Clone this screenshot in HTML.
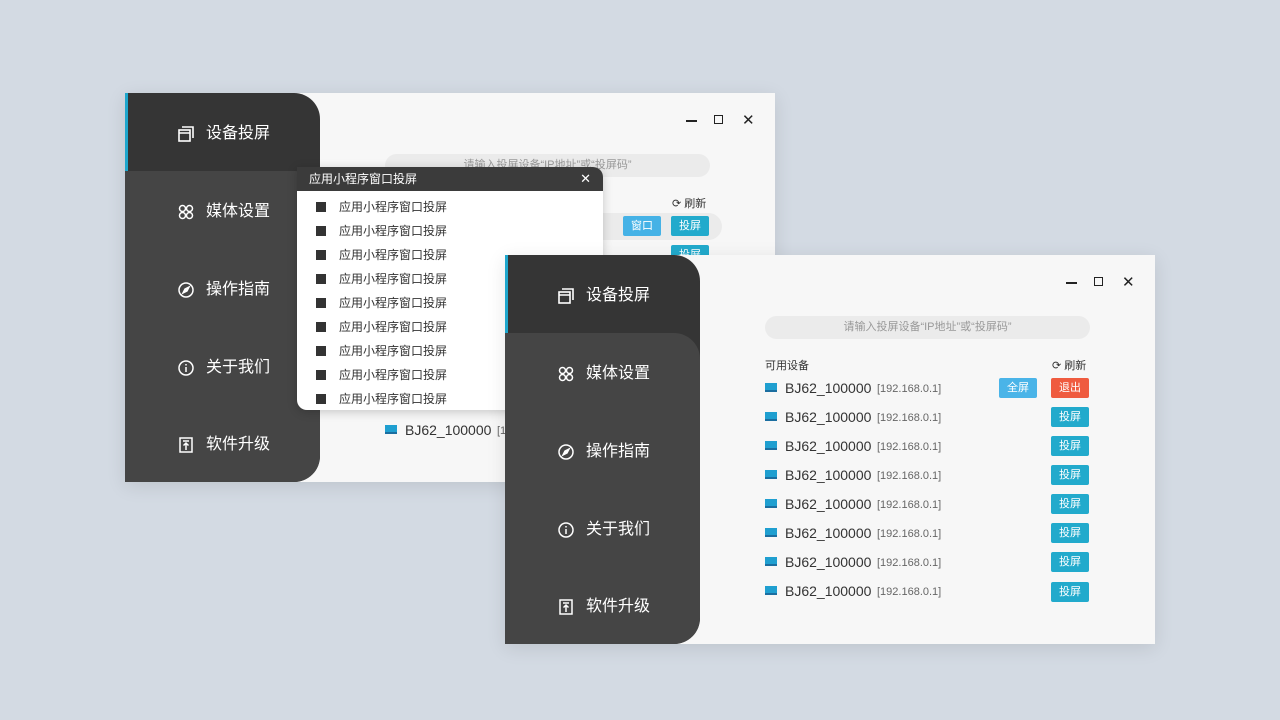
<!DOCTYPE html>
<html><head><meta charset="utf-8"><style>
*{margin:0;padding:0;box-sizing:border-box}
body{width:1280px;height:720px;background:#d3dae3;position:relative;overflow:hidden;font-family:"Liberation Sans","Noto Sans CJK SC",sans-serif}
.win{position:absolute;width:650px;height:389px;background:#f7f7f7;box-shadow:0 4px 18px rgba(0,0,0,.10)}
.side{position:absolute;left:0;top:0;width:195px;height:100%;background:#353535;border-radius:0 26px 26px 0}
.side .low{position:absolute;left:0;top:78px;width:195px;bottom:0;background:#454545;border-radius:0 26px 26px 0}
.bar{position:absolute;left:0;top:0;width:3px;height:78px;background:#1ea6cc}
.it{position:absolute;left:53px;color:#fff;font-size:16px;height:22px;line-height:22px;display:flex;align-items:center}
.it svg{margin-right:12px}
.ctl{position:absolute;top:20px;font-size:13px;color:#222}
.mn{position:absolute;left:561px;top:27px;width:11px;height:1.5px;background:#222}
.search{position:absolute;left:260px;top:61px;width:325px;height:23px;border-radius:12px;background:#ebebeb;color:#999;font-size:11px;text-align:center;line-height:23px}
.lbl{position:absolute;left:260px;top:102px;font-size:11px;color:#333}
.ref{position:absolute;left:547px;top:102px;font-size:11px;color:#333}
.row{position:absolute;left:260px;height:20px;width:330px}
.row .ic{position:absolute;left:0;top:5px;width:12px;height:9px;background:#1f9fd0;border-bottom:2px solid #1b6ea0}
.row .nm{position:absolute;left:20px;top:2px;font-size:14px;color:#333}
.row .ip{position:absolute;left:112px;top:5px;font-size:11px;color:#666}
.btn{position:absolute;width:38px;height:20px;border-radius:2px;color:#fff;font-size:11px;text-align:center;line-height:20px;background:#22aacc}
.pop{position:absolute;left:297px;top:167px;width:306px;height:243px;background:#fff;border-radius:0 10px 10px 10px;overflow:hidden;box-shadow:0 2px 10px rgba(0,0,0,.2)}
.pop .hd{height:24px;background:#3b3b3b;color:#fff;font-size:12px;line-height:24px;padding-left:12px;position:relative}
.pop .pi{position:absolute;left:19px;font-size:12px;color:#333;height:16px;line-height:16px}
.pop .pi::before{content:"";position:absolute;left:0;top:3px;width:10px;height:10px;background:#333}
.pop .pi span{margin-left:23px}
</style></head><body>

<div class="win" style="left:125px;top:93px">
  <div style="position:absolute;left:150px;top:120px;width:447px;height:27px;background:#ebebeb;border-radius:14px"></div>
  <div class="mn"></div><div class="ctl" style="left:589px;top:22px;width:9px;height:9px;border:1.5px solid #222"></div><div class="ctl" style="left:617px;top:18px;font-size:15px">✕</div>
  <div class="search">请输入投屏设备“IP地址”或“投屏码”</div>
  <div class="ref">⟳ 刷新</div>
  <div class="btn" style="left:498px;top:123px;background:#45b2e6">窗口</div>
  <div class="btn" style="left:546px;top:123px">投屏</div>
  <div class="btn" style="left:546px;top:152px">投屏</div>
  <div class="row" style="top:327px"><div class="ic"></div><div class="nm">BJ62_100000</div><div class="ip">[192.168.0.1]</div></div>
  <div class="side"><div class="low"></div></div>
  <div class="bar"></div>
  <div class="it" style="top:30px"><svg width="16" height="16" viewBox="0 0 16 16" fill="none" stroke="#fff" stroke-width="1.6"><rect x="1" y="4" width="11" height="11"/><path d="M4 1h11v11M1 7h11"/></svg>设备投屏</div>
  <div class="it" style="top:108px"><svg width="16" height="16" viewBox="0 0 16 16" fill="none" stroke="#fff" stroke-width="1.5"><circle cx="4.5" cy="4.5" r="3"/><circle cx="11.5" cy="4.5" r="3"/><circle cx="4.5" cy="11.5" r="3"/><circle cx="11.5" cy="11.5" r="3"/></svg>媒体设置</div>
  <div class="it" style="top:186px"><svg width="16" height="16" viewBox="0 0 16 16" fill="none" stroke="#fff" stroke-width="1.5"><circle cx="8" cy="8" r="7"/><path d="M11 5L9 9 5 11 7 7z" fill="#fff"/></svg>操作指南</div>
  <div class="it" style="top:264px"><svg width="16" height="16" viewBox="0 0 16 16" fill="none" stroke="#fff" stroke-width="1.5"><circle cx="8" cy="8" r="7"/><path d="M8 7v5M8 4v1.5"/></svg>关于我们</div>
  <div class="it" style="top:341px"><svg width="16" height="16" viewBox="0 0 16 16" fill="none" stroke="#fff" stroke-width="1.5"><rect x="2" y="1" width="12" height="14"/><path d="M5 4h6M8 13V6M5.5 8.5L8 6l2.5 2.5"/></svg>软件升级</div>
</div>

<div class="pop">
  <div class="hd">应用小程序窗口投屏<span style="position:absolute;right:12px;top:0;font-size:13px">✕</span></div>
  <div class="pi" style="top:32px"><span>应用小程序窗口投屏</span></div>
  <div class="pi" style="top:56px"><span>应用小程序窗口投屏</span></div>
  <div class="pi" style="top:80px"><span>应用小程序窗口投屏</span></div>
  <div class="pi" style="top:104px"><span>应用小程序窗口投屏</span></div>
  <div class="pi" style="top:128px"><span>应用小程序窗口投屏</span></div>
  <div class="pi" style="top:152px"><span>应用小程序窗口投屏</span></div>
  <div class="pi" style="top:176px"><span>应用小程序窗口投屏</span></div>
  <div class="pi" style="top:200px"><span>应用小程序窗口投屏</span></div>
  <div class="pi" style="top:224px"><span>应用小程序窗口投屏</span></div>
</div>

<div class="win" style="left:505px;top:255px">
  <div class="mn"></div><div class="ctl" style="left:589px;top:22px;width:9px;height:9px;border:1.5px solid #222"></div><div class="ctl" style="left:617px;top:18px;font-size:15px">✕</div>
  <div class="search">请输入投屏设备“IP地址”或“投屏码”</div>
  <div class="lbl">可用设备</div>
  <div class="ref">⟳ 刷新</div>
  <div class="row" style="top:123px"><div class="ic"></div><div class="nm">BJ62_100000</div><div class="ip">[192.168.0.1]</div></div>
  <div class="row" style="top:152px"><div class="ic"></div><div class="nm">BJ62_100000</div><div class="ip">[192.168.0.1]</div></div>
  <div class="row" style="top:181px"><div class="ic"></div><div class="nm">BJ62_100000</div><div class="ip">[192.168.0.1]</div></div>
  <div class="row" style="top:210px"><div class="ic"></div><div class="nm">BJ62_100000</div><div class="ip">[192.168.0.1]</div></div>
  <div class="row" style="top:239px"><div class="ic"></div><div class="nm">BJ62_100000</div><div class="ip">[192.168.0.1]</div></div>
  <div class="row" style="top:268px"><div class="ic"></div><div class="nm">BJ62_100000</div><div class="ip">[192.168.0.1]</div></div>
  <div class="row" style="top:297px"><div class="ic"></div><div class="nm">BJ62_100000</div><div class="ip">[192.168.0.1]</div></div>
  <div class="row" style="top:326px"><div class="ic"></div><div class="nm">BJ62_100000</div><div class="ip">[192.168.0.1]</div></div>
  <div class="btn" style="left:494px;top:123px;background:#4ab4e8">全屏</div>
  <div class="btn" style="left:546px;top:123px;background:#ef5b3f">退出</div>
  <div class="btn" style="left:546px;top:152px">投屏</div>
  <div class="btn" style="left:546px;top:181px">投屏</div>
  <div class="btn" style="left:546px;top:210px">投屏</div>
  <div class="btn" style="left:546px;top:239px">投屏</div>
  <div class="btn" style="left:546px;top:268px">投屏</div>
  <div class="btn" style="left:546px;top:297px">投屏</div>
  <div class="btn" style="left:546px;top:327px">投屏</div>
  <div class="side"><div class="low"></div></div>
  <div class="bar"></div>
  <div class="it" style="top:30px"><svg width="16" height="16" viewBox="0 0 16 16" fill="none" stroke="#fff" stroke-width="1.6"><rect x="1" y="4" width="11" height="11"/><path d="M4 1h11v11M1 7h11"/></svg>设备投屏</div>
  <div class="it" style="top:108px"><svg width="16" height="16" viewBox="0 0 16 16" fill="none" stroke="#fff" stroke-width="1.5"><circle cx="4.5" cy="4.5" r="3"/><circle cx="11.5" cy="4.5" r="3"/><circle cx="4.5" cy="11.5" r="3"/><circle cx="11.5" cy="11.5" r="3"/></svg>媒体设置</div>
  <div class="it" style="top:186px"><svg width="16" height="16" viewBox="0 0 16 16" fill="none" stroke="#fff" stroke-width="1.5"><circle cx="8" cy="8" r="7"/><path d="M11 5L9 9 5 11 7 7z" fill="#fff"/></svg>操作指南</div>
  <div class="it" style="top:264px"><svg width="16" height="16" viewBox="0 0 16 16" fill="none" stroke="#fff" stroke-width="1.5"><circle cx="8" cy="8" r="7"/><path d="M8 7v5M8 4v1.5"/></svg>关于我们</div>
  <div class="it" style="top:341px"><svg width="16" height="16" viewBox="0 0 16 16" fill="none" stroke="#fff" stroke-width="1.5"><rect x="2" y="1" width="12" height="14"/><path d="M5 4h6M8 13V6M5.5 8.5L8 6l2.5 2.5"/></svg>软件升级</div>
</div>
</body></html>
